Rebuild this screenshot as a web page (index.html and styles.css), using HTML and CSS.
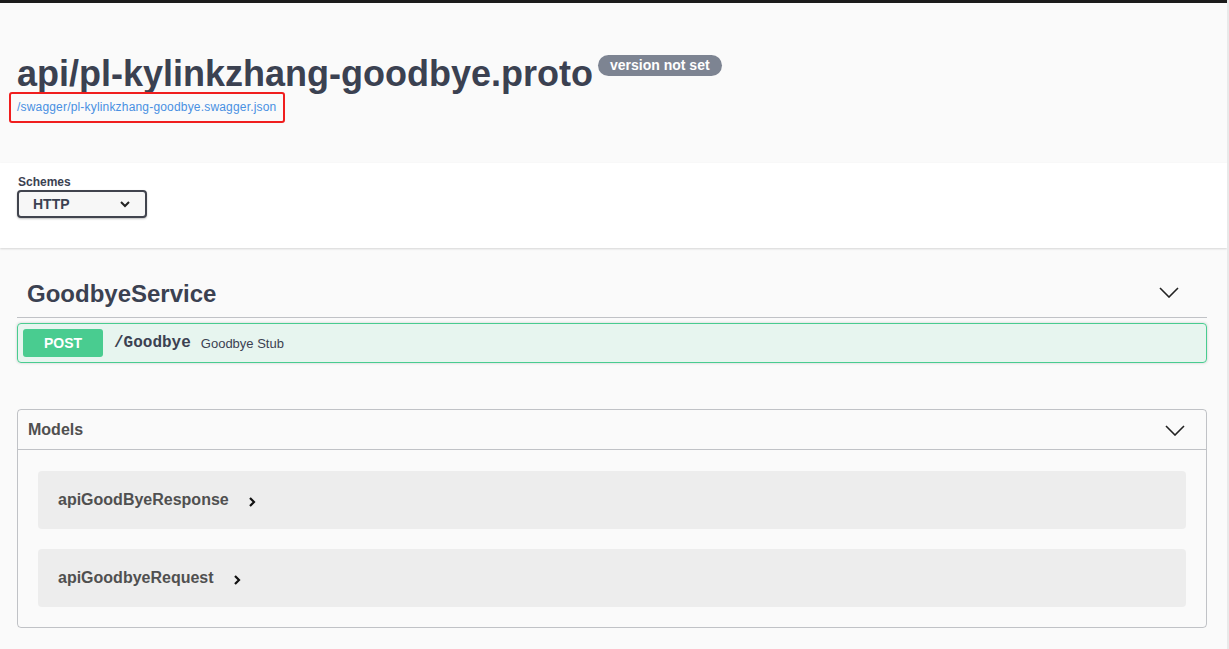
FILE: index.html
```html
<!DOCTYPE html>
<html lang="en">
<head>
<meta charset="utf-8">
<title>Swagger UI</title>
<link rel="stylesheet" href="styles.css">
</head>
<body>
<div class="page">
  <div class="topbar"></div>
  <div class="info wrap">
    <div class="title-row">
      <h2 class="title">api/pl-kylinkzhang-goodbye.proto</h2>
      <span class="version">version not set</span>
    </div>
    <div class="mark"><a class="url" href="#">/swagger/pl-kylinkzhang-goodbye.swagger.json</a></div>
  </div>
  <div class="schemes">
    <div class="wrap">
      <div class="schemes-label">Schemes</div>
      <div class="select"><span>HTTP</span>
        <svg class="sel-arrow" width="10" height="7" viewBox="0 0 10 7"><path d="M1 1l4 4 4-4" fill="none" stroke="#222" stroke-width="2"/></svg>
      </div>
    </div>
  </div>
  <div class="wrap">
    <section class="tag">
      <h3 class="tag-head"><span>GoodbyeService</span>
        <svg width="20" height="11" viewBox="0 0 20 11"><path d="M1 1l9 9 9-9" fill="none" stroke="#222" stroke-width="1.6"/></svg>
      </h3>
      <div class="opblock">
        <span class="method">POST</span>
        <span class="path">/Goodbye</span>
        <span class="summary">Goodbye Stub</span>
      </div>
    </section>
    <section class="models">
      <h4 class="models-head"><span>Models</span>
        <svg width="20" height="11" viewBox="0 0 20 11"><path d="M1 1l9 9 9-9" fill="none" stroke="#222" stroke-width="1.6"/></svg>
      </h4>
      <div class="models-body">
        <div class="model"><span>apiGoodByeResponse</span>
          <svg width="8" height="10" viewBox="0 0 8 10"><path d="M2 1l4 4-4 4" fill="none" stroke="#111" stroke-width="2.2"/></svg>
        </div>
        <div class="model"><span>apiGoodbyeRequest</span>
          <svg width="8" height="10" viewBox="0 0 8 10"><path d="M2 1l4 4-4 4" fill="none" stroke="#111" stroke-width="2.2"/></svg>
        </div>
      </div>
    </section>
  </div>
</div>
</body>
</html>
```
FILE: styles.css
```css
html, body {
  margin: 0;
  padding: 0;
}
body {
  background: #e9e9e9;
  font-family: "Liberation Sans", Arial, sans-serif;
  color: #3b4151;
}
.page {
  width: 1227px;
  min-height: 649px;
  background: #fafafa;
  overflow: hidden;
}
.topbar {
  height: 3px;
  background: #1b1b1b;
}
.wrap {
  padding: 0 20px 0 17px;
}
.info {
  padding-top: 50px;
  padding-bottom: 40px;
}
.title-row {
  display: flex;
  align-items: flex-start;
}
.title {
  margin: 0;
  font-size: 36px;
  line-height: 41px;
  font-weight: 700;
  color: #3b4151;
}
.version {
  margin: 2px 0 0 5px;
  padding: 2px 12px;
  background: #7d8492;
  color: #fff;
  font-size: 14px;
  line-height: 17px;
  font-weight: 700;
  border-radius: 57px;
}
.mark {
  display: inline-block;
  margin: -2px 0 0 -8px;
  padding: 6px 7px 7px 6px;
  border: 2px solid #f01e1e;
  border-radius: 3px;
}
.url {
  display: block;
  font-size: 12px;
  line-height: 14px;
  letter-spacing: 0.18px;
  color: #4990e2;
  text-decoration: none;
}
.schemes {
  background: #fff;
  box-shadow: 0 1px 2px 0 rgba(0, 0, 0, 0.15);
  padding: 12px 0 30px;
}
.schemes-label {
  font-size: 12px;
  font-weight: 700;
  line-height: 14px;
  margin-bottom: 1px;
  padding-left: 1px;
}
.select {
  box-sizing: border-box;
  width: 130px;
  height: 28px;
  border: 2px solid #41444e;
  border-radius: 4px;
  background: #f7f7f7;
  box-shadow: 0 1px 2px 0 rgba(0, 0, 0, 0.25);
  display: flex;
  align-items: center;
  justify-content: space-between;
  padding: 0 15px 0 14px;
  font-size: 14px;
  font-weight: 700;
}
.tag {
  margin-top: 21px;
}
.tag-head {
  margin: 0;
  padding: 11px 28px 9px 10px;
  display: flex;
  align-items: center;
  justify-content: space-between;
  font-size: 24px;
  line-height: 28px;
  font-weight: 700;
  border-bottom: 1px solid rgba(59, 65, 81, 0.3);
}
.tag-head svg {
  margin-top: -3px;
}
.opblock {
  margin-top: 5px;
  border: 1px solid #49cc90;
  background: rgba(73, 204, 144, 0.1);
  border-radius: 4px;
  box-shadow: 0 0 3px rgba(0, 0, 0, 0.19);
  padding: 5px;
  display: flex;
  align-items: center;
}
.method {
  width: 80px;
  height: 28px;
  background: #49cc90;
  border-radius: 3px;
  color: #fff;
  font-size: 14px;
  font-weight: 700;
  display: flex;
  align-items: center;
  justify-content: center;
}
.path {
  margin-left: 11px;
  font-family: "Liberation Mono", "Courier New", monospace;
  font-size: 16px;
  font-weight: 700;
  color: #3b4151;
}
.summary {
  margin-left: 10px;
  font-size: 13px;
  color: #3b4151;
}
.models {
  margin-top: 46px;
  border: 1px solid rgba(59, 65, 81, 0.3);
  border-radius: 4px;
}
.models-head {
  margin: 0;
  height: 40px;
  padding: 1px 21px 0 10px;
  box-sizing: border-box;
  display: flex;
  align-items: center;
  justify-content: space-between;
  font-size: 16px;
  font-weight: 700;
  color: #505050;
  border-bottom: 1px solid rgba(59, 65, 81, 0.3);
}
.models-body {
  padding: 21px 20px 20px;
  display: flex;
  flex-direction: column;
  gap: 20px;
}
.model {
  height: 58px;
  background: #ededed;
  border-radius: 4px;
  padding: 0 20px;
  display: flex;
  align-items: center;
  gap: 19px;
  font-size: 16px;
  font-weight: 700;
  color: #505050;
}
.model svg {
  margin-top: 3px;
}
```
